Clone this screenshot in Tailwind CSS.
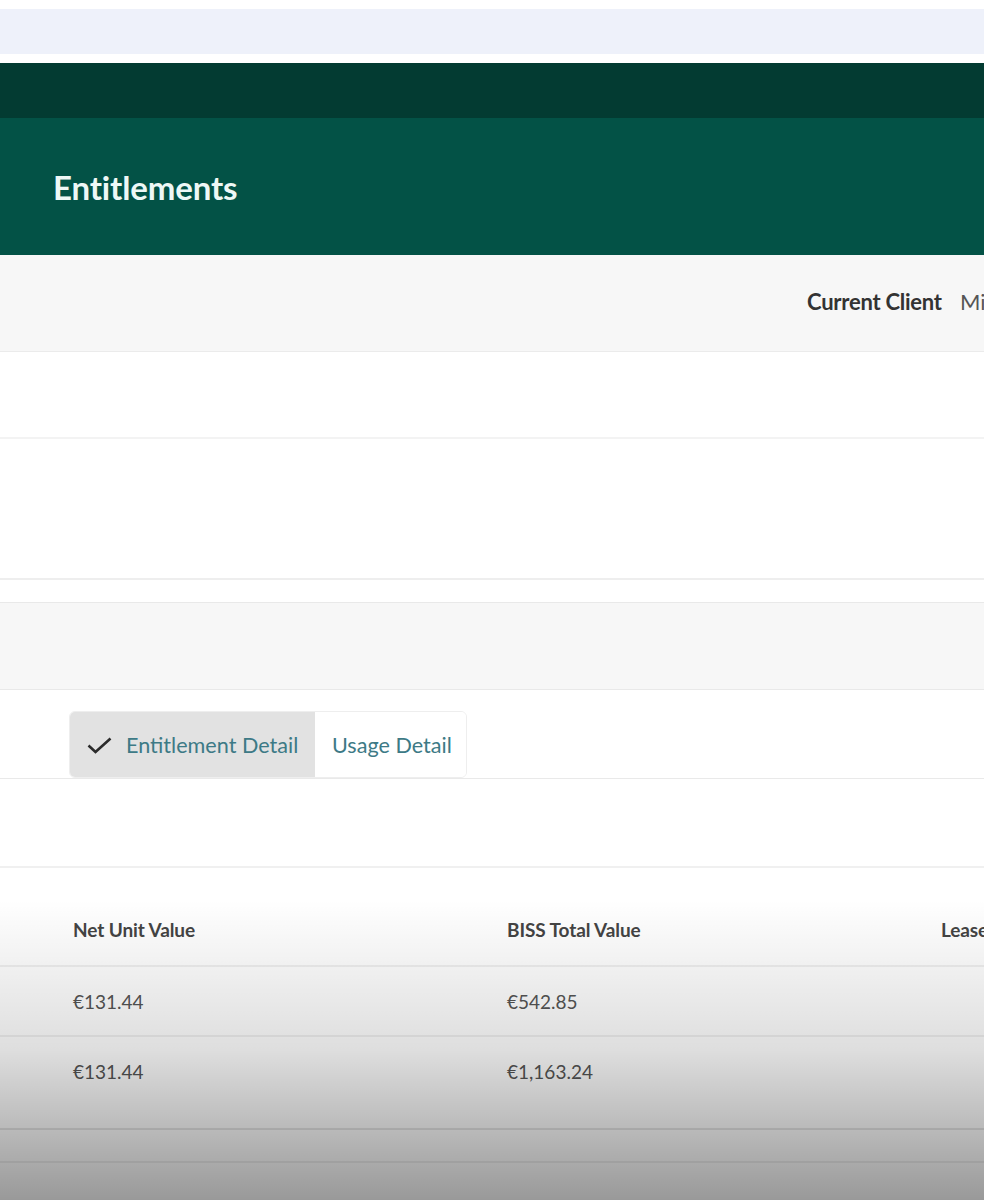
<!DOCTYPE html>
<html lang="en">
<head>
  <meta charset="UTF-8">
  <meta name="viewport" content="width=device-width, initial-scale=1">
  <title>Entitlements</title>
  <script src="https://cdn.jsdelivr.net/npm/@tailwindcss/browser@4"></script>
</head>
<body class="relative h-[1200px] w-[984px] overflow-hidden bg-white font-['Lato','Noto_Sans',sans-serif] text-[#333]">

  <!-- top strip -->
  <div class="h-[9px] bg-white"></div>
  <div class="h-[45px] bg-[#eef1fa]"></div>
  <div class="h-[9px] bg-white"></div>

  <!-- header -->
  <div class="h-[55px] bg-[#033b32]"></div>
  <div class="flex h-[137px] items-center bg-[#035246] pl-[53px]">
    <h1 class="text-[33px] leading-none font-bold tracking-[-0.15px] text-[#eef8f6] pt-[1px]">Entitlements</h1>
  </div>

  <!-- client row -->
  <div class="flex h-[97px] items-center whitespace-nowrap border-b border-[#ebebeb] bg-[#f7f7f7] pl-[807px] text-[22px]">
    <span class="w-[153px] shrink-0 font-bold tracking-[-0.25px] text-[#333] pb-[3px]">Current Client</span>
    <span class="text-[#555] pb-[3px]">Michael</span>
  </div>

  <div class="h-[87px] border-b-2 border-[#f3f3f3]"></div>
  <div class="h-[141px] border-b-2 border-[#eeeeee]"></div>
  <div class="h-[22px]"></div>
  <div class="h-[88px] border-y border-[#e9e9e9] bg-[#f7f7f7]"></div>

  <!-- tabs -->
  <div class="flex h-[89px] items-end border-b border-[#e9e9e9] pl-[69px]">
    <div class="flex h-[67px] w-[398px] overflow-hidden rounded-[6px] border border-[#eeeeee] text-[21.6px] text-[#3d7a86]">
      <div class="flex w-[245px] items-center bg-[#e2e2e2] pl-[17px]">
        <svg class="mr-[14px] mt-[2px] h-[17px] w-[25px]" viewBox="0 0 25 17" fill="none" stroke="#2b2b2b" stroke-width="2.6">
          <path d="M1.5 8.5 L8.5 15 L23.5 1.5"/>
        </svg>
        <span class="pt-[1px]">Entitlement Detail</span>
      </div>
      <div class="flex flex-1 items-center bg-white pl-[17px] pt-[1px]">Usage Detail</div>
    </div>
  </div>

  <div class="h-[89px] border-b-2 border-[#f0f0f0]"></div>

  <!-- table -->
  <div class="grid h-[99px] grid-cols-[434px_434px_434px] items-center border-b-2 border-[#f0f0f0] pl-[73px] pt-[40px] pb-[13px] whitespace-nowrap text-[19px] font-bold tracking-[-0.1px] text-[#444]">
    <div>Net Unit Value</div>
    <div>BISS Total Value</div>
    <div>Lease Value</div>
  </div>
  <div class="grid h-[70px] grid-cols-[434px_434px] items-center border-b-2 border-[#f0f0f0] pl-[73px] pt-[3px] text-[19px] text-[#555]">
    <div>€131.44</div>
    <div>€542.85</div>
  </div>
  <div class="grid h-[93px] grid-cols-[434px_434px] items-start border-b-2 border-[#e6e6e6] pl-[73px] pt-[21px] text-[19px] text-[#555]">
    <div>€131.44</div>
    <div>€1,163.24</div>
  </div>
  <div class="h-[33px] border-b-2 border-[#efefef]"></div>

  <!-- fade over the bottom of the page -->
  <div class="pointer-events-none absolute inset-x-0 bottom-0 h-[300px] bg-gradient-to-b from-black/0 via-black/13 to-black/40"></div>
</body>
</html>
